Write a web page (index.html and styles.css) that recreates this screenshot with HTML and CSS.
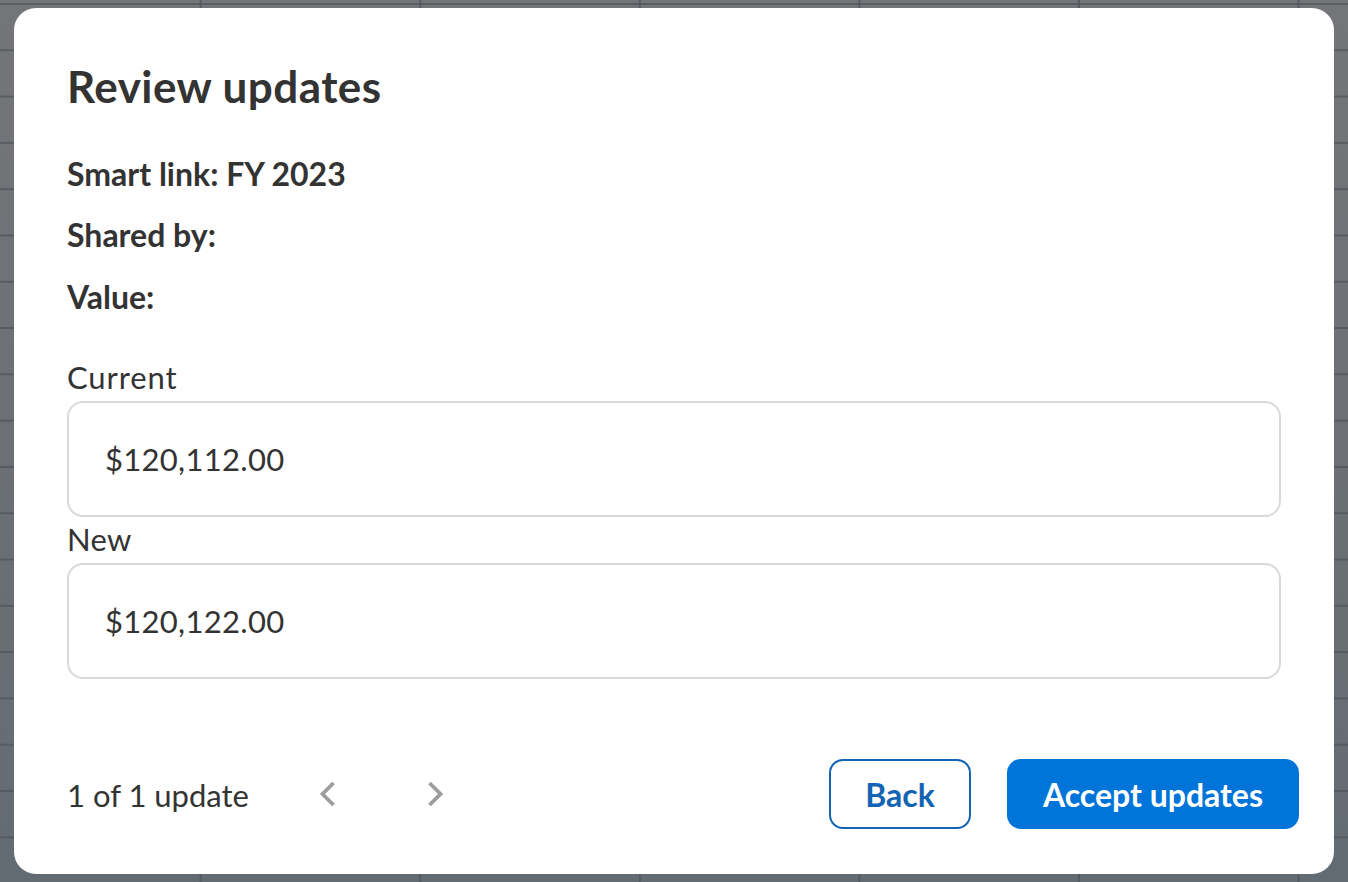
FILE: index.html
```html
<!DOCTYPE html>
<html lang="en">
<head>
<meta charset="utf-8">
<title>Review updates</title>
<link rel="stylesheet" href="styles.css">
</head>
<body>
<div class="backdrop">
  <div class="dialog">
    <h1 class="title">Review updates</h1>
    <div class="meta">
      <div class="meta-row">Smart link: FY 2023</div>
      <div class="meta-row">Shared by:</div>
      <div class="meta-row">Value:</div>
    </div>
    <div class="field field-current">
      <div class="field-label">Current</div>
      <div class="field-box">$120,112.00</div>
    </div>
    <div class="field field-new">
      <div class="field-label">New</div>
      <div class="field-box">$120,122.00</div>
    </div>
    <div class="footer">
      <div class="pager">
        <span class="pager-text">1 of 1 update</span>
        <button class="chev chev-prev" aria-label="Previous">
          <svg width="17" height="26" viewBox="0 0 17 26"><path d="M14.5 2 L3.5 13 L14.5 24" fill="none" stroke="#9d9d9d" stroke-width="3.8"/></svg>
        </button>
        <button class="chev chev-next" aria-label="Next">
          <svg width="17" height="26" viewBox="0 0 17 26"><path d="M2.5 2 L13.5 13 L2.5 24" fill="none" stroke="#9d9d9d" stroke-width="3.8"/></svg>
        </button>
      </div>
      <div class="actions">
        <button class="btn btn-secondary">Back</button>
        <button class="btn btn-primary">Accept updates</button>
      </div>
    </div>
  </div>
</div>
</body>
</html>
```

FILE: styles.css
```css
html, body {
  margin: 0;
  padding: 0;
  height: 100%;
}
body {
  font-family: Lato, "Open Sans", Arial, sans-serif;
  color: #333333;
  background-color: #6c7074;
  background-image:
    linear-gradient(to right, rgba(80, 84, 90, 0.75) 2px, transparent 2px),
    linear-gradient(to bottom, rgba(80, 84, 90, 0.75) 2px, transparent 2px),
    linear-gradient(to bottom, #747578 0%, #6c7075 50%, #636b72 100%);
  background-size: 219.6px 46.3px, 219.6px 46.3px, 100% 100%;
  background-position: -20px 3px, -20px 3px, 0 0;
}
.backdrop {
  padding: 8px 14px 8px 14px;
  box-sizing: border-box;
  height: 882px;
}
.dialog {
  background: #ffffff;
  border-radius: 22px;
  height: 866px;
  box-sizing: border-box;
  padding: 52px 0 45px 53px;
  display: flex;
  flex-direction: column;
}
.title {
  margin: 0;
  font-size: 44px;
  line-height: 52px;
  letter-spacing: 0.45px;
  font-weight: 700;
  color: #333333;
}
.meta {
  margin-top: 42.5px;
  display: flex;
  flex-direction: column;
  gap: 23.5px;
}
.meta-row {
  font-size: 32px;
  line-height: 38px;
  font-weight: 700;
  color: #333333;
}
.field {
  margin-right: 53px;
}
.field-current {
  margin-top: 43px;
}
.field-new {
  margin-top: 3.5px;
}
.field-label {
  font-size: 31px;
  line-height: 37px;
  letter-spacing: 0.3px;
  color: #333333;
  margin-bottom: 5.5px;
}
.field-current .field-label {
  letter-spacing: 0.9px;
}
.field-box {
  height: 116px;
  box-sizing: border-box;
  border: 2px solid #d9d9d9;
  border-radius: 16px;
  padding: 0 36px;
  display: flex;
  align-items: center;
  font-size: 31px;
  letter-spacing: 0.3px;
  color: #333333;
}
.footer {
  margin-top: auto;
  margin-right: 35px;
  height: 70px;
  display: flex;
  align-items: center;
  justify-content: space-between;
}
.pager {
  display: flex;
  align-items: center;
}
.pager-text {
  font-size: 31px;
  line-height: 37px;
  color: #333333;
  padding-top: 2px;
}
.chev {
  background: none;
  border: none;
  padding: 0;
  width: 17px;
  height: 26px;
  display: flex;
  align-items: center;
  justify-content: center;
  cursor: pointer;
}
.chev-prev {
  margin-left: 70px;
}
.chev-next {
  margin-left: 91px;
}
.actions {
  display: flex;
  gap: 36px;
}
.btn {
  font-family: Lato, "Open Sans", Arial, sans-serif;
  font-size: 32px;
  font-weight: 700;
  height: 70px;
  border-radius: 14px;
  box-sizing: border-box;
  cursor: pointer;
}
.btn-secondary {
  background: #ffffff;
  color: #1464b4;
  border: 2px solid #1464b4;
  padding: 0 34px;
}
.btn-primary {
  background: #0074d9;
  color: #ffffff;
  border: none;
  padding: 0 36px;
}
```
